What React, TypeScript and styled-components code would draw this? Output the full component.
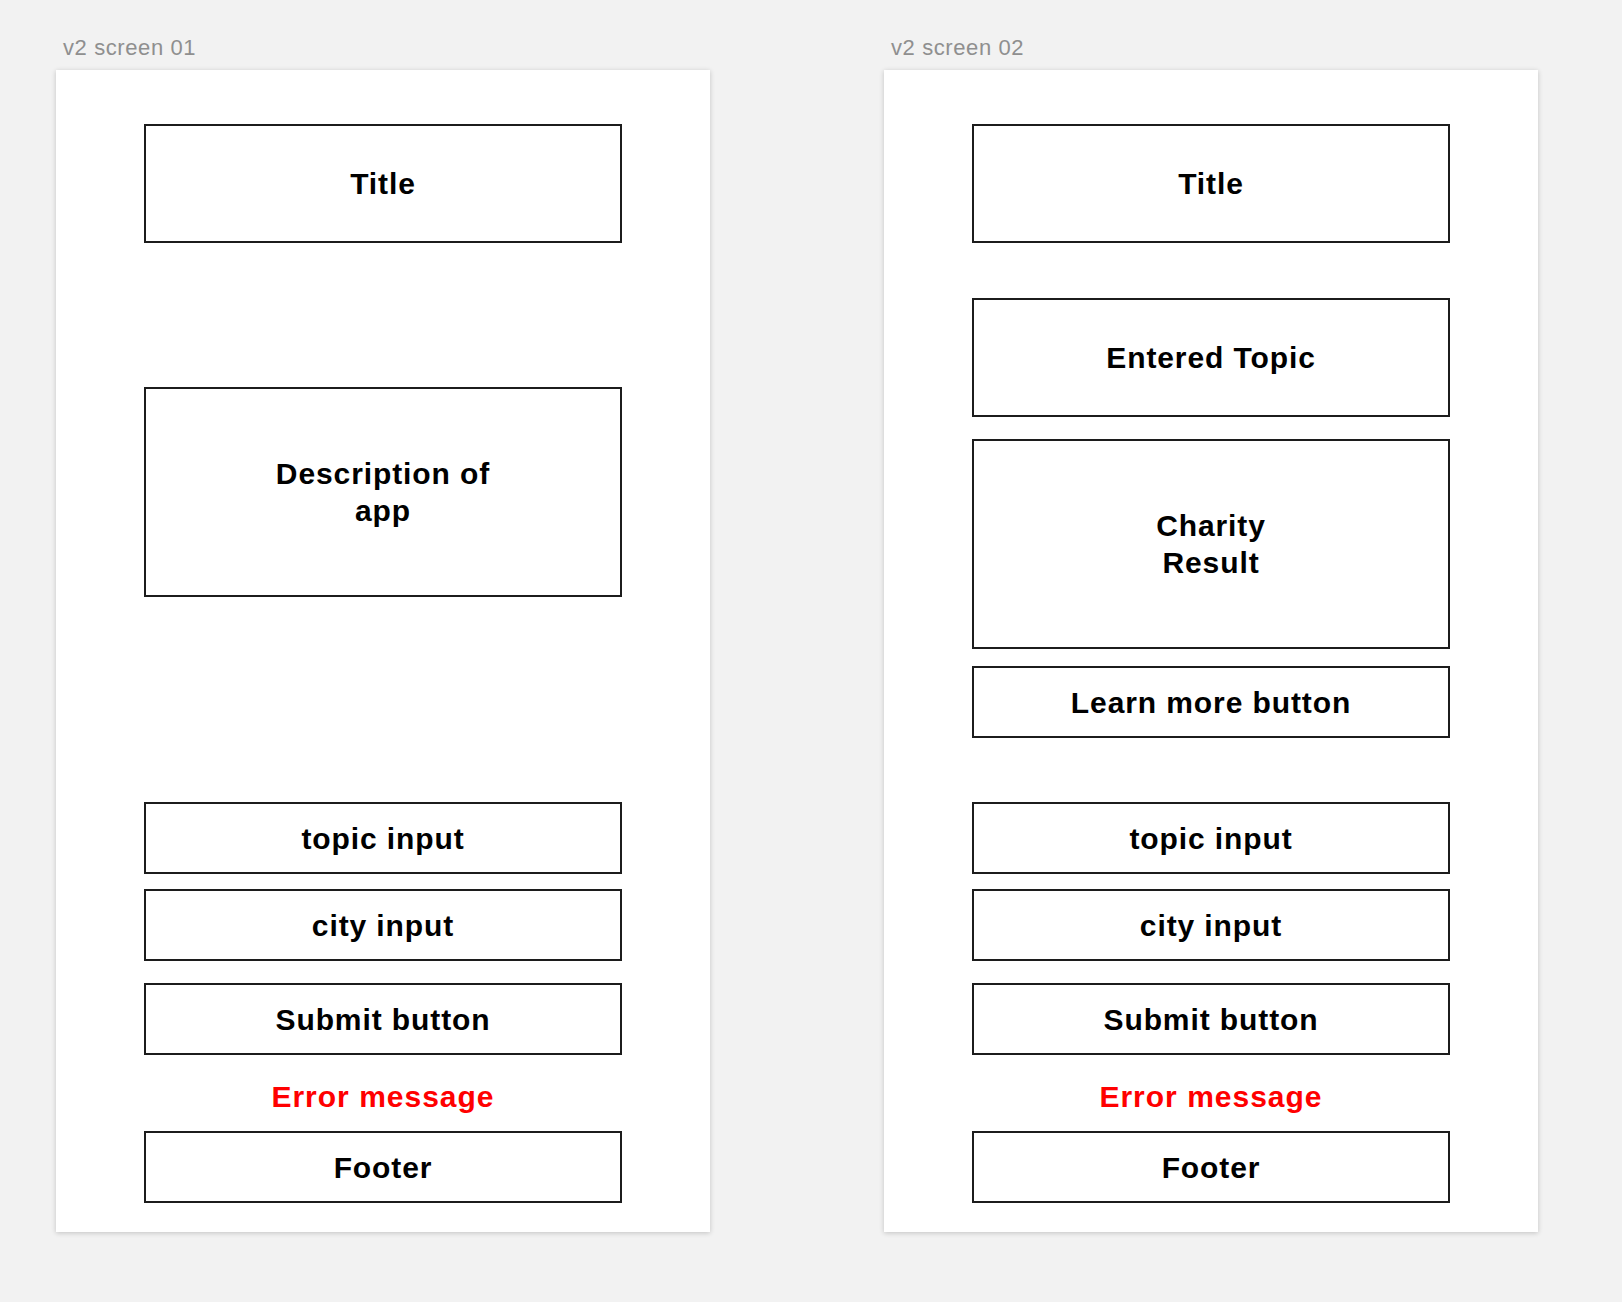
import styled, { createGlobalStyle } from "styled-components";

const GlobalStyle = createGlobalStyle`
  html, body {
    margin: 0;
    padding: 0;
    background: #f2f2f2;
  }
  * {
    box-sizing: border-box;
  }
`;

type Block =
  | { kind: "box"; text: React.ReactNode; h: number; mt: number }
  | { kind: "error"; mt: number };

// the bottom form is the same on both screens, only the gap above it changes
const formBlocks = (topicGap: number): Block[] => [
  { kind: "box", text: "topic input", h: 72, mt: topicGap },
  { kind: "box", text: "city input", h: 72, mt: 15 },
  { kind: "box", text: "Submit button", h: 72, mt: 22 },
  { kind: "error", mt: 24 },
  { kind: "box", text: "Footer", h: 72, mt: 16 },
];

const screens: { label: string; blocks: Block[] }[] = [
  {
    label: "v2 screen 01",
    blocks: [
      { kind: "box", text: "Title", h: 119, mt: 0 },
      {
        kind: "box",
        text: (
          <>
            Description of
            <br />
            app
          </>
        ),
        h: 210,
        mt: 144,
      },
      ...formBlocks(205),
    ],
  },
  {
    label: "v2 screen 02",
    blocks: [
      { kind: "box", text: "Title", h: 119, mt: 0 },
      { kind: "box", text: "Entered Topic", h: 119, mt: 55 },
      {
        kind: "box",
        text: (
          <>
            Charity
            <br />
            Result
          </>
        ),
        h: 210,
        mt: 22,
      },
      { kind: "box", text: "Learn more button", h: 72, mt: 17 },
      ...formBlocks(64),
    ],
  },
];

const App = () => {
  return (
    <>
      <GlobalStyle />
      <Canvas>
        {screens.map((screen) => (
          <ScreenColumn key={screen.label}>
            <ScreenLabel>{screen.label}</ScreenLabel>
            <Frame>
              {screen.blocks.map((block, i) =>
                block.kind === "box" ? (
                  <WireBox key={i} $h={block.h} $mt={block.mt}>
                    {block.text}
                  </WireBox>
                ) : (
                  <ErrorText key={i} $mt={block.mt}>
                    Error message
                  </ErrorText>
                ),
              )}
            </Frame>
          </ScreenColumn>
        ))}
      </Canvas>
    </>
  );
};

const Canvas = styled.div`
  display: flex;
  gap: 174px;
  padding: 36px 0 0 56px;
  width: 1622px;
  height: 1302px;
  background: #f2f2f2;
`;

const ScreenColumn = styled.div`
  display: flex;
  flex-direction: column;
`;

const ScreenLabel = styled.div`
  height: 34px;
  padding-left: 7px;
  font-family: "Liberation Sans", Arial, sans-serif;
  font-size: 22px;
  line-height: 24px;
  letter-spacing: 0.6px;
  color: #8f8f8f;
`;

const Frame = styled.div`
  display: flex;
  flex-direction: column;
  align-items: center;
  width: 654px;
  height: 1162px;
  padding-top: 54px;
  background: #ffffff;
  box-shadow: 0 1px 5px rgba(0, 0, 0, 0.2);
`;

const WireBox = styled.div<{ $h: number; $mt: number }>`
  display: flex;
  align-items: center;
  justify-content: center;
  flex-shrink: 0;
  width: 478px;
  height: ${({ $h }) => $h}px;
  margin-top: ${({ $mt }) => $mt}px;
  border: 2px solid #1c1c1c;
  font-family: "Liberation Sans", Arial, sans-serif;
  font-weight: 700;
  font-size: 30px;
  line-height: 37px;
  letter-spacing: 0.9px;
  color: #000000;
  text-align: center;
`;

const ErrorText = styled.div<{ $mt: number }>`
  height: 36px;
  margin-top: ${({ $mt }) => $mt}px;
  font-family: "Liberation Sans", Arial, sans-serif;
  font-weight: 700;
  font-size: 30px;
  line-height: 36px;
  letter-spacing: 1px;
  color: #ff0000;
  text-align: center;
`;

export default App;
